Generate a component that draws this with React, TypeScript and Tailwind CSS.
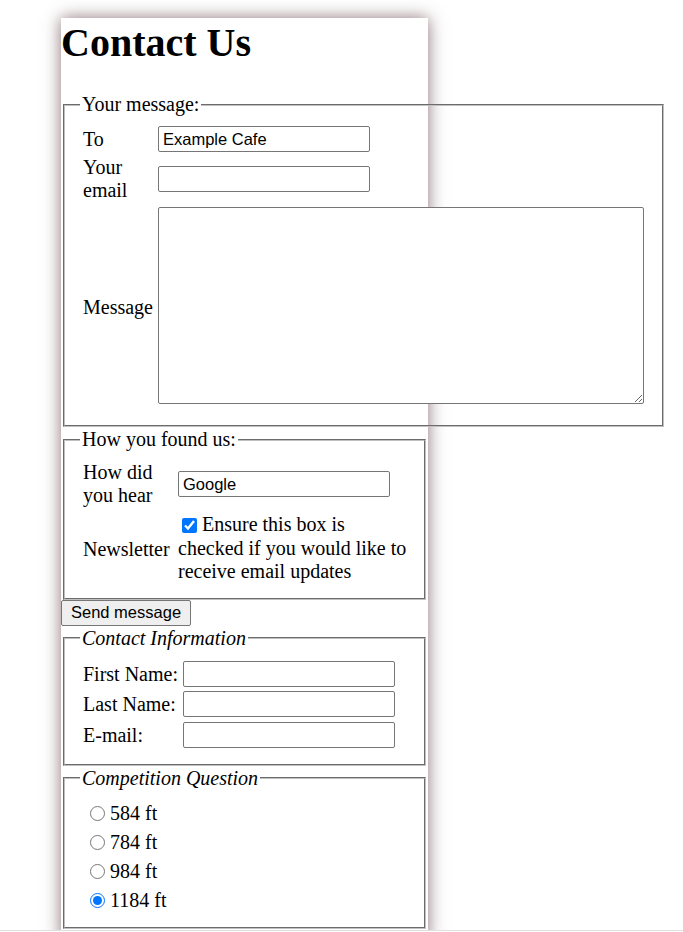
import React from 'react';

const fieldsetCls =
  "mx-[2px] border-2 border-[#c0c0c0] [border-style:groove] px-[15px] pt-[7px] pb-[12px]";
const legendCls = "px-[2px] leading-[25px]";
const inputCls =
  "h-[26px] w-[212px] rounded-[2px] border border-[#767676] bg-white pl-[4px] font-['Liberation_Sans',Arial,sans-serif] text-[16.5px] text-black outline-none";

function TextBox({ value = '' }: { value?: string }) {
  return <input type="text" defaultValue={value} className={`${inputCls} self-center`} />;
}

export default function App() {
  const answers = ['584 ft', '784 ft', '984 ft', '1184 ft'];

  return (
    <div className="min-h-screen bg-white pt-[18px] font-['Liberation_Serif','Times_New_Roman',serif] text-[20px] leading-[23px] text-black">
      <div className="ml-[61px] w-[367px] bg-white pb-[12px] shadow-[0_0_16px_rgba(110,80,85,0.8)]">
        <h1 className="mb-[24px] text-[40px] font-bold leading-[50px]">Contact Us</h1>

        <form>
          {/* message */}
          <fieldset className={`${fieldsetCls} w-[601px]`}>
            <legend className={legendCls}>Your message:</legend>
            <div className="grid grid-cols-[71px_486px] gap-x-[4px] gap-y-[4px] pb-[9px] pl-[3px] pt-[2px]">
              <label className="self-center">To</label>
              <TextBox value="Example Cafe" />

              <label className="self-center">Your email</label>
              <TextBox />

              <label className="self-center pt-[5px]">Message</label>
              <textarea className="mt-[1px] h-[197px] w-[486px] rounded-[2px] border border-[#767676] bg-white font-['Liberation_Mono',monospace] text-[14px] outline-none" />
            </div>
          </fieldset>

          {/* found us */}
          <fieldset className={fieldsetCls}>
            <legend className={legendCls}>How you found us:</legend>
            <div className="grid grid-cols-[91px_1fr] gap-x-[4px] gap-y-[6px] pb-[2px] pl-[3px] pt-[2px]">
              <label className="self-center">How did you hear</label>
              <TextBox value="Google" />

              <label className="self-center pt-[3px]">Newsletter</label>
              <div className="leading-[23.5px]">
                <input
                  type="checkbox"
                  defaultChecked
                  className="m-0 ml-[4px] mr-[5px] h-[15px] w-[15px] align-[-2px]"
                />
                Ensure this box is checked if you would like to receive email updates
              </div>
            </div>
          </fieldset>

          <button
            type="button"
            className="block h-[26px] rounded-[2px] border border-[#767676] bg-[#efefef] px-[9px] font-['Liberation_Sans',Arial,sans-serif] text-[16.5px] leading-[19px] text-black"
          >
            Send message
          </button>

          {/* contact info */}
          <fieldset className={fieldsetCls}>
            <legend className={`${legendCls} italic`}>Contact Information</legend>
            <div className="grid grid-cols-[96px_212px] gap-x-[4px] gap-y-[4.5px] pb-[4px] pl-[3px] pt-[3px]">
              <label className="self-center pt-[1px]">First Name:</label>
              <TextBox />
              <label className="self-center pt-[1px]">Last Name:</label>
              <TextBox />
              <label className="self-center pt-[1px]">E-mail:</label>
              <TextBox />
            </div>
          </fieldset>

          {/* competition */}
          <fieldset className={fieldsetCls}>
            <legend className={`${legendCls} italic`}>Competition Question</legend>
            <div className="flex flex-col pt-[1px]">
              {answers.map((a, i) => (
                <label key={a} className="flex h-[29px] items-center pl-[10px]">
                  <input
                    type="radio"
                    name="height"
                    defaultChecked={i === 3}
                    className="m-0 mr-[5px] h-[15px] w-[15px]"
                  />
                  <span className="pt-[1px]">{a}</span>
                </label>
              ))}
            </div>
          </fieldset>
        </form>
      </div>

      <div className="fixed left-0 right-0 top-[930px] h-[2px] border-t border-[#e0e0e0] bg-white" />
    </div>
  );
}
